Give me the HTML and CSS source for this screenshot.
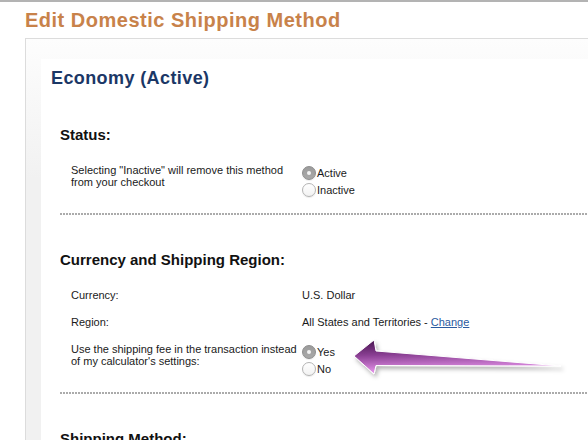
FILE: index.html
```html
<!DOCTYPE html>
<html lang="en">
<head>
    <meta charset="UTF-8">
    <meta name="viewport" content="width=device-width, initial-scale=1.0">
    <title>Edit Domestic Shipping Method</title>
    <link rel="stylesheet" href="styles.css">
</head>
<body>
    <div class="top-line"></div>
    <div class="page">
        <h1 class="page-title">Edit Domestic Shipping Method</h1>

        <div class="panel">
            <div class="panel-inner">
                <h2 class="method-name">Economy (Active)</h2>

                <div class="section">
                    <h3>Status:</h3>
                    <div class="row">
                        <div class="label">Selecting "Inactive" will remove this method<br>from your checkout</div>
                        <div class="value">
                            <div class="option"><span class="radio on"></span>Active</div>
                            <div class="option"><span class="radio"></span>Inactive</div>
                        </div>
                    </div>
                    <div class="divider"></div>
                </div>

                <div class="section">
                    <h3>Currency and Shipping Region:</h3>
                    <div class="row">
                        <div class="label">Currency:</div>
                        <div class="value">U.S. Dollar</div>
                    </div>
                    <div class="row">
                        <div class="label">Region:</div>
                        <div class="value">All States and Territories - <a href="#">Change</a></div>
                    </div>
                    <div class="row">
                        <div class="label">Use the shipping fee in the transaction instead<br>of my calculator's settings:</div>
                        <div class="value">
                            <div class="option"><span class="radio on"></span>Yes</div>
                            <div class="option"><span class="radio"></span>No</div>
                        </div>
                    </div>
                    <div class="divider"></div>
                </div>

                <div class="section">
                    <h3>Shipping Method:</h3>
                </div>
            </div>
        </div>
    </div>

    <!-- callout arrow pointing at the Yes/No choice -->
    <svg class="callout-arrow" width="240" height="60" viewBox="0 0 240 60">
        <defs>
            <linearGradient id="arrowFill" x1="0" y1="0" x2="0.15" y2="1">
                <stop offset="0" stop-color="#45134d"/>
                <stop offset="0.45" stop-color="#8a3f93"/>
                <stop offset="1" stop-color="#ee9cf2"/>
            </linearGradient>
            <filter id="arrowShadow" x="-10%" y="-30%" width="120%" height="180%">
                <feDropShadow dx="2" dy="3" stdDeviation="2" flood-color="#000" flood-opacity="0.3"/>
            </filter>
        </defs>
        <path d="M14 26 L34 10 L36 21 L221 36 L36 35.5 L34 44 Z" fill="url(#arrowFill)" stroke="#fff" stroke-width="1" stroke-linejoin="round" filter="url(#arrowShadow)"/>
    </svg>
</body>
</html>
```

FILE: styles.css
```css
body {
    margin: 0;
    font-family: "Liberation Sans", Arial, Helvetica, sans-serif;
    color: #1a1a1a;
    background-color: #fff;
    overflow: hidden;
}

.top-line {
    height: 2px;
    background-color: #b3b3b3;
}

.page {
    padding-left: 25px;
}

.page-title {
    margin: 6px 0 6px 0;
    font-size: 20px;
    line-height: 24px;
    letter-spacing: 0.5px;
    color: #c8824a;
}

.panel {
    border: 1px solid #dcdcdc;
    border-right: none;
    padding: 20px 0 0 15px;
    background: linear-gradient(#fdfdfd, #f1f1f1 140px);
}

.panel-inner {
    background-color: #fff;
    padding: 8px 0 40px 10px;
}

.method-name {
    margin: 0;
    font-size: 18px;
    line-height: 22px;
    letter-spacing: 0.4px;
    color: #1b3766;
}

.section {
    margin-top: 36px;
    padding-left: 9px;
}

.section:first-of-type {
    margin-top: 37px;
}

.section h3 {
    margin: 0 0 20px 0;
    font-size: 15px;
    line-height: 18px;
    color: #111;
}

.row {
    display: grid;
    grid-template-columns: 231px auto;
    padding-left: 11px;
    margin-bottom: 15px;
    font-size: 11px;
    line-height: 12px;
}

.row:last-of-type {
    margin-bottom: 0;
}

.value a {
    color: #2a5aa0;
}

.option {
    display: flex;
    align-items: center;
    height: 17px;
}

.radio {
    box-sizing: border-box;
    width: 14px;
    height: 14px;
    margin-right: 1px;
    border: 1px solid #b4b4b4;
    border-radius: 50%;
    background: linear-gradient(#fff, #f2f2f2);
    box-shadow: 0 1px 1px rgba(0, 0, 0, 0.08);
    display: flex;
    align-items: center;
    justify-content: center;
}

.radio.on {
    border-color: #8c8c8c;
    background: linear-gradient(#9c9c9c, #a9a9a9);
}

.radio.on::after {
    content: "";
    width: 4px;
    height: 4px;
    border-radius: 50%;
    background-color: #f2f2f2;
}

.divider {
    height: 2px;
    margin-top: 13px;
    background-image: repeating-linear-gradient(to right, #ababab 0, #ababab 2px, transparent 2px, transparent 3px);
}

.callout-arrow {
    position: absolute;
    left: 340px;
    top: 330px;
}
```
